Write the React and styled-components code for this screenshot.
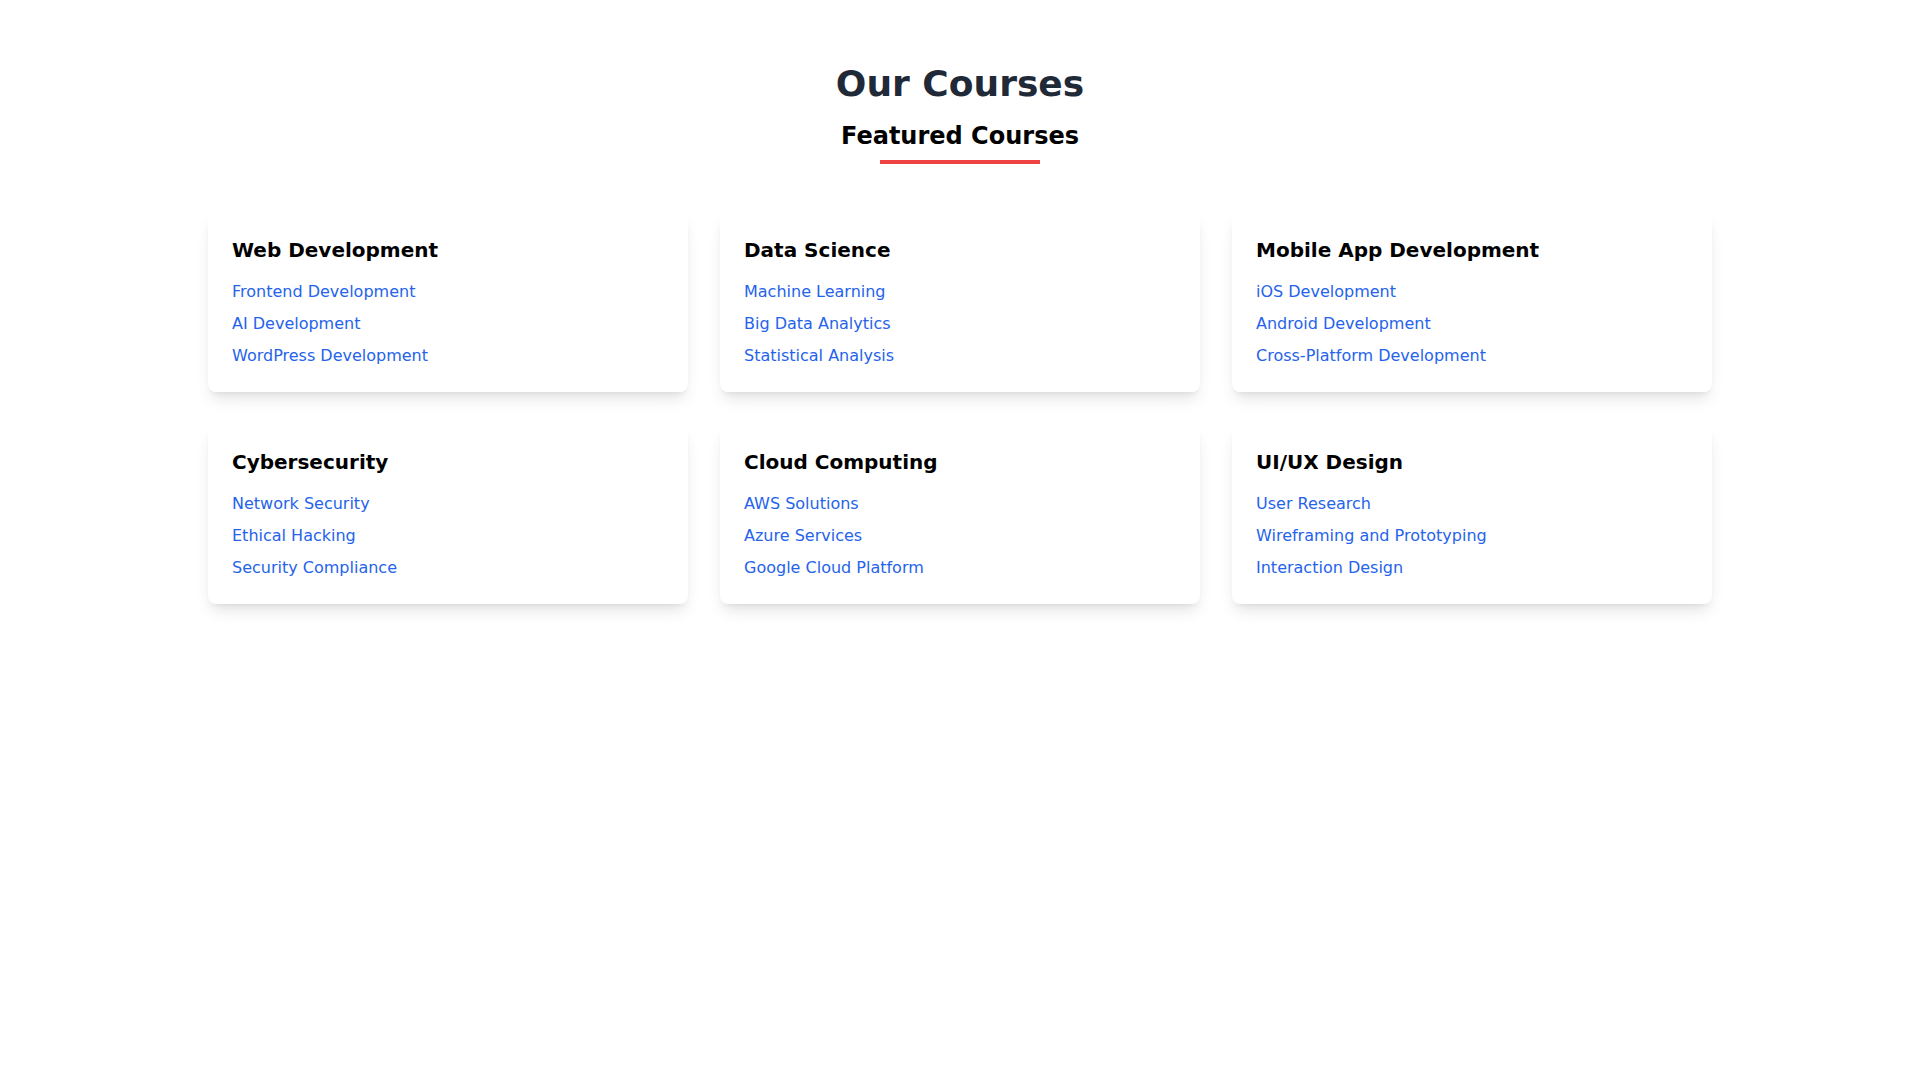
import styled, { createGlobalStyle } from 'styled-components';

const GlobalStyle = createGlobalStyle`
  *, *::before, *::after {
    box-sizing: border-box;
  }
  body {
    margin: 0;
    background: #ffffff;
    font-family: 'DejaVu Sans', 'Liberation Sans', sans-serif;
  }
  h1, h2, h3, ul, p {
    margin: 0;
    padding: 0;
  }
`;

const Section = styled.section`
  padding: 64px 0;
`;

const Container = styled.div`
  max-width: 1536px;
  margin: 0 auto;
  padding: 0 16px;
`;

const Header = styled.div`
  display: flex;
  flex-direction: column;
  align-items: center;
  margin-bottom: 48px;
`;

const Title = styled.h1`
  font-size: 36px;
  line-height: 40px;
  font-weight: 700;
  color: #1f2937;
  margin-bottom: 16px;
`;

const Subtitle = styled.h2`
  font-size: 24px;
  line-height: 32px;
  font-weight: 700;
  color: #000;
`;

const Underline = styled.div`
  width: 160px;
  height: 4px;
  margin-top: 8px;
  background: #ef4444;
`;

const Grid = styled.div`
  display: grid;
  grid-template-columns: repeat(3, 1fr);
  gap: 32px;
`;

const Card = styled.div`
  background: #fff;
  border-radius: 8px;
  padding: 24px;
  box-shadow: 0 10px 15px -3px rgba(0, 0, 0, 0.1), 0 4px 6px -4px rgba(0, 0, 0, 0.1);
`;

const CardTitle = styled.h3`
  font-size: 20px;
  line-height: 28px;
  font-weight: 700;
  color: #000;
  margin-bottom: 16px;
`;

const LinkList = styled.ul`
  list-style: none;
  display: flex;
  flex-direction: column;
  gap: 8px;
`;

const CourseLink = styled.a`
  font-size: 16px;
  line-height: 24px;
  color: #2563eb;
  text-decoration: none;
`;

const courses = [
  { name: 'Web Development', items: ['Frontend Development', 'AI Development', 'WordPress Development'] },
  { name: 'Data Science', items: ['Machine Learning', 'Big Data Analytics', 'Statistical Analysis'] },
  { name: 'Mobile App Development', items: ['iOS Development', 'Android Development', 'Cross-Platform Development'] },
  { name: 'Cybersecurity', items: ['Network Security', 'Ethical Hacking', 'Security Compliance'] },
  { name: 'Cloud Computing', items: ['AWS Solutions', 'Azure Services', 'Google Cloud Platform'] },
  { name: 'UI/UX Design', items: ['User Research', 'Wireframing and Prototyping', 'Interaction Design'] },
];

export default function App() {
  return (
    <>
      <GlobalStyle />
      <Section>
        <Container>
          <Header>
            <Title>Our Courses</Title>
            <Subtitle>Featured Courses</Subtitle>
            <Underline />
          </Header>
          <Grid>
            {courses.map((course) => (
              <Card key={course.name}>
                <CardTitle>{course.name}</CardTitle>
                <LinkList>
                  {course.items.map((item) => (
                    <li key={item}>
                      <CourseLink href="#">{item}</CourseLink>
                    </li>
                  ))}
                </LinkList>
              </Card>
            ))}
          </Grid>
        </Container>
      </Section>
    </>
  );
}
